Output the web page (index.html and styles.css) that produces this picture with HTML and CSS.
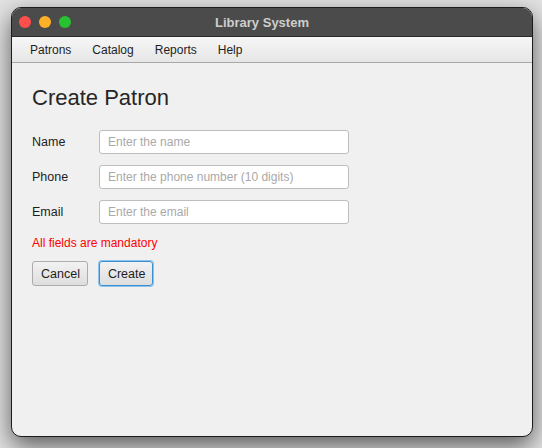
FILE: index.html
```html
<!DOCTYPE html>
<html>
<head>
<meta charset="utf-8">
<link rel="stylesheet" href="styles.css">
</head>
<body>
<div class="window">
  <div class="titlebar">
    <div class="lights">
      <span class="light red"></span>
      <span class="light yellow"></span>
      <span class="light green"></span>
    </div>
    <div class="title">Library System</div>
  </div>
  <div class="menubar">
    <span class="menu">Patrons</span>
    <span class="menu">Catalog</span>
    <span class="menu">Reports</span>
    <span class="menu">Help</span>
  </div>
  <div class="content">
    <h1 class="heading">Create Patron</h1>
    <div class="form">
      <label class="label">Name</label>
      <div class="input">Enter the name</div>
      <label class="label">Phone</label>
      <div class="input">Enter the phone number (10 digits)</div>
      <label class="label">Email</label>
      <div class="input">Enter the email</div>
    </div>
    <div class="error">All fields are mandatory</div>
    <div class="buttons">
      <button class="btn">Cancel</button>
      <button class="btn focused">Create</button>
    </div>
  </div>
</div>
</body>
</html>
```
FILE: styles.css
```css
html, body {
  margin: 0;
  padding: 0;
}
body {
  width: 542px;
  height: 448px;
  background: #e2e2e2;
  font-family: "Liberation Sans", Arial, sans-serif;
  padding: 7px 10px 12px 11px;
  box-sizing: border-box;
  overflow: hidden;
}
.window {
  width: 522px;
  height: 430px;
  box-sizing: border-box;
  border: 1px solid #1c1c1c;
  border-radius: 10px;
  background: #f0f0f0;
  overflow: hidden;
  display: flex;
  flex-direction: column;
  box-shadow: 0 9px 24px rgba(0,0,0,0.6);
}
.titlebar {
  height: 28px;
  background: #4b4b4b;
  position: relative;
  display: flex;
  align-items: center;
  justify-content: center;
  padding-right: 20px;
  border-bottom: 1px solid #2a2a2a;
  flex-shrink: 0;
}
.lights {
  position: absolute;
  left: 7px;
  top: 8px;
  display: flex;
  gap: 8px;
}
.light {
  width: 12px;
  height: 12px;
  border-radius: 50%;
  display: block;
}
.red { background: #fe4f4b; }
.yellow { background: #fdb127; }
.green { background: #28c131; }
.title {
  color: #cdcdcd;
  font-weight: bold;
  font-size: 13px;
}
.menubar {
  background: linear-gradient(#f6f6f6, #e6e6e6);
  border-bottom: 1px solid #a8a8a8;
  display: flex;
  align-items: center;
  padding-left: 18px;
  gap: 21px;
  flex-shrink: 0;
  box-sizing: border-box;
  height: 26px;
}
.menu {
  font-size: 12px;
  color: #1e1e1e;
}
.content {
  padding: 22px 20px 0 20px;
}
.heading {
  margin: 0 0 19px 0;
  font-weight: normal;
  font-size: 22px;
  color: #262626;
  line-height: 26px;
}
.form {
  display: grid;
  grid-template-columns: 67px 250px;
  row-gap: 11px;
  align-items: center;
}
.label {
  font-size: 12.5px;
  color: #1e1e1e;
}
.input {
  height: 24px;
  box-sizing: border-box;
  border: 1px solid #bdbdbd;
  border-radius: 3px;
  background: #ffffff;
  font-size: 12px;
  color: #a9a9a9;
  padding-left: 8px;
  line-height: 22px;
}
.error {
  margin-top: 12px;
  font-size: 12px;
  color: #ff0000;
  line-height: 15px;
}
.buttons {
  display: flex;
  gap: 11px;
  margin-top: 10px;
}
.btn {
  font-family: "Liberation Sans", Arial, sans-serif;
  font-size: 12.5px;
  color: #1e1e1e;
  height: 25px;
  padding: 0 7px 0 8px;
  border: 1px solid #adadad;
  border-radius: 3px;
  background: linear-gradient(#f2f2f2, #dedede);
  margin: 0;
}
.focused {
  border-color: #3a8fd0;
  box-shadow: 0 0 0 1px #8cc4ee;
}
```
